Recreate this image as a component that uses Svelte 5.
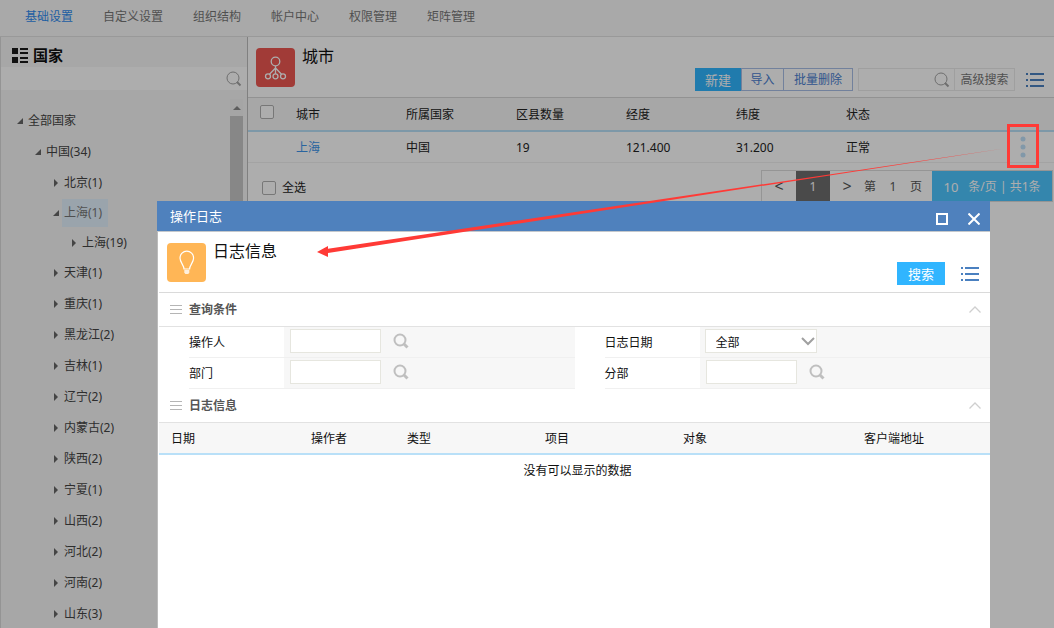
<script>
  const tabs = ["基础设置", "自定义设置", "组织结构", "帐户中心", "权限管理", "矩阵管理"];

  // Flattened country tree: depth drives the indent, open flips the triangle.
  const tree = [
    { name: "全部国家", depth: 0, open: true },
    { name: "中国(34)", depth: 1, open: true },
    { name: "北京(1)", depth: 2 },
    { name: "上海(1)", depth: 2, open: true },
    { name: "上海(19)", depth: 3 },
    { name: "天津(1)", depth: 2 },
    { name: "重庆(1)", depth: 2 },
    { name: "黑龙江(2)", depth: 2 },
    { name: "吉林(1)", depth: 2 },
    { name: "辽宁(2)", depth: 2 },
    { name: "内蒙古(2)", depth: 2 },
    { name: "陕西(2)", depth: 2 },
    { name: "宁夏(1)", depth: 2 },
    { name: "山西(2)", depth: 2 },
    { name: "河北(2)", depth: 2 },
    { name: "河南(2)", depth: 2 },
    { name: "山东(3)", depth: 2 },
  ];

  const cityCols = ["城市", "所属国家", "区县数量", "经度", "纬度", "状态"];
  const cities = [["上海", "中国", "19", "121.400", "31.200", "正常"]];

  const logCols = [
    { name: "日期", width: 140 },
    { name: "操作者", width: 96 },
    { name: "类型", width: 138 },
    { name: "项目", width: 138 },
    { name: "对象", width: 181 },
    { name: "客户端地址", width: 138 },
  ];

  let selected = $state("上海(1)");
</script>

{#snippet listIcon()}
  <svg class="list-icon" width="18" height="16" viewBox="0 0 18 16" aria-hidden="true">
    <path d="M0 2h2M4 2h14M0 8h2M4 8h14M0 14h2M4 14h14" stroke="currentColor" stroke-width="2" />
  </svg>
{/snippet}

{#snippet thinLens()}
  <svg width="16" height="16" viewBox="0 0 16 16" fill="none" stroke="#a3a3a3" aria-hidden="true">
    <circle cx="7" cy="7" r="6" />
    <path d="M11 11l3.5 3.5" stroke-width="2" />
  </svg>
{/snippet}

{#snippet boldLens()}
  <svg width="16" height="16" viewBox="0 0 16 16" fill="none" stroke="#bfbfbf" aria-hidden="true">
    <circle cx="7" cy="7" r="5.500" stroke-width="2" />
    <path d="M10.5 10.5l4 4" stroke-width="3" />
  </svg>
{/snippet}

{#snippet sectionHead(title)}
  <div class="section-head">
    <svg width="12" height="10" viewBox="0 0 12 10" aria-hidden="true">
      <path d="M0 .5h12M0 4.500h12M0 8.500h12" stroke="#b5b5b5" />
    </svg>
    <h3>{title}</h3>
    <button class="bare" aria-label="收起{title}">
      <svg width="12" height="8" viewBox="0 0 12 8" aria-hidden="true">
        <path d="M.5 6.5L6 1l5.500 5.500" fill="none" stroke="#cfcfcf" stroke-width="1.300" />
      </svg>
    </button>
  </div>
{/snippet}

{#snippet lookup(id)}
  <div class="field">
    <input {id} type="text" />
    <button class="bare" aria-label="选择">{@render boldLens()}</button>
  </div>
{/snippet}

<div class="page">
  <nav class="tabs">
    {#each tabs as tab, i}
      <a href="#tab{i}" class:active={i === 0}>{tab}</a>
    {/each}
  </nav>

  <div class="columns">
    <aside>
      <div class="side-head">
        <svg width="16" height="15" viewBox="0 0 16 15" aria-hidden="true">
          <path d="M0 0h6v6H0zM0 9h6v6H0zM8 0h8v2H8zM8 4h8v2H8zM8 9h8v2H8zM8 13h8v2H8z" fill="#1a1a1a" />
        </svg>
        <h2>国家</h2>
      </div>
      <div class="side-search">
        <input type="text" aria-label="搜索国家" />
        <button class="bare" aria-label="搜索">{@render thinLens()}</button>
      </div>
      <div class="side-body">
        <ul>
          {#each tree as node}
            <li style="padding-left: {node.depth * 18}px">
              <svg width="6" height="8" viewBox="0 0 6 8" aria-hidden="true">
                <path d={node.open ? "M6 1v6H0z" : "M1 0l4 4-4 4z"} fill="#666" />
              </svg>
              <button
                class="bare node"
                class:selected={node.name === selected}
                onclick={() => (selected = node.name)}>{node.name}</button
              >
            </li>
          {/each}
        </ul>
        <div class="scrollbar">
          <svg width="8" height="4" viewBox="0 0 8 4" aria-hidden="true">
            <path d="M0 4l4-4 4 4z" fill="#8a8a8a" />
          </svg>
          <div class="thumb"></div>
        </div>
      </div>
    </aside>

    <main>
      <header class="main-head">
        <svg class="badge red" width="39" height="39" viewBox="0 0 39 39" fill="none" stroke="#fff" aria-hidden="true">
          <circle cx="19.500" cy="13.500" r="4.300" stroke-width="1.300" />
          <path d="M19.500 18v8M19.500 20l-6 6.200M19.500 20l6 6.200" stroke-width="1.300" />
          <circle cx="12" cy="28.300" r="2.500" stroke-width="1.300" />
          <circle cx="19.500" cy="28.300" r="2.500" stroke-width="1.300" />
          <circle cx="27" cy="28.300" r="2.500" stroke-width="1.300" />
        </svg>
        <h1>城市</h1>
        <div class="toolbar">
          <div class="group">
            <button class="primary">新建</button>
            <button class="outline">导入</button>
            <button class="outline wide">批量删除</button>
          </div>
          <div class="search">
            <input type="text" aria-label="搜索城市" />
            <button class="bare" aria-label="搜索">{@render thinLens()}</button>
            <button class="advanced">高级搜索</button>
          </div>
          <button class="bare blue" aria-label="菜单">{@render listIcon()}</button>
        </div>
      </header>

      <table class="cities">
        <colgroup>
          <col class="c-check" />
          {#each cityCols as _}<col class="c-data" />{/each}
          <col />
        </colgroup>
        <thead>
          <tr>
            <th><input type="checkbox" aria-label="选择全部城市" /></th>
            {#each cityCols as col}<th>{col}</th>{/each}
            <th></th>
          </tr>
        </thead>
        <tbody>
          {#each cities as row}
            <tr>
              <td></td>
              {#each row as cell, i}
                <td>{#if i === 0}<a href="#city">{cell}</a>{:else}{cell}{/if}</td>
              {/each}
              <td class="more">
                <button class="bare" aria-label="更多">
                  <svg width="6" height="22" viewBox="0 0 6 22" fill="#bfe0fa" aria-hidden="true">
                    <circle cx="3" cy="3" r="2.500" />
                    <circle cx="3" cy="11" r="2.500" />
                    <circle cx="3" cy="19" r="2.500" />
                  </svg>
                </button>
              </td>
            </tr>
          {/each}
        </tbody>
      </table>

      <footer>
        <label><input type="checkbox" />全选</label>
        <div class="pager">
          <button class="bare step">&lt;</button>
          <button class="current">1</button>
          <button class="bare step">&gt;</button>
          <span>第</span>
          <span class="num">1</span>
          <span>页</span>
          <div class="size"><span class="count">10</span><span>条/页 | 共1条</span></div>
        </div>
      </footer>
    </main>
  </div>

  <div class="mask"></div>

  <div class="dialog" role="dialog" aria-labelledby="dialog-title">
    <div class="titlebar">
      <h2 id="dialog-title">操作日志</h2>
      <button class="bare" aria-label="最大化">
        <svg width="12" height="12" viewBox="0 0 12 12" aria-hidden="true">
          <path d="M1 1h10v10H1z" fill="none" stroke="#fff" stroke-width="2" />
        </svg>
      </button>
      <button class="bare" aria-label="关闭">
        <svg width="12" height="12" viewBox="0 0 12 12" aria-hidden="true">
          <path d="M.5.5l11 11M11.500.5l-11 11" stroke="#fff" stroke-width="2" />
        </svg>
      </button>
    </div>
    <div class="dialog-body">
      <header class="dialog-head">
        <svg class="badge orange" width="39" height="39" viewBox="0 0 39 39" fill="none" stroke="#fff" aria-hidden="true">
          <path d="M17 26c0-4-4-6.500-4-11a6.800 6.800 0 0 1 13.600 0c0 4.500-4 7-4 11z" stroke-width="1.200" />
          <path d="M17.300 27h5v2.500l-1 1.500h-3l-1-1.500z" fill="#fff" fill-opacity=".8" stroke="none" />
        </svg>
        <h2>日志信息</h2>
        <div class="dialog-tools">
          <button class="primary search-btn">搜索</button>
          <button class="bare blue" aria-label="菜单">{@render listIcon()}</button>
        </div>
      </header>

      {@render sectionHead("查询条件")}
      <form>
        <div class="form-row">
          <label for="operator">操作人</label>
          {@render lookup("operator")}
          <label for="log-date">日志日期</label>
          <div class="field">
            <div class="select">
              <select id="log-date"><option>全部</option></select>
              <svg width="14" height="9" viewBox="0 0 14 9" aria-hidden="true">
                <path d="M1 1l6 6 6-6" fill="none" stroke="#a0a0a0" stroke-width="2" />
              </svg>
            </div>
          </div>
        </div>
        <div class="form-row">
          <label for="department">部门</label>
          {@render lookup("department")}
          <label for="branch">分部</label>
          {@render lookup("branch")}
        </div>
      </form>

      {@render sectionHead("日志信息")}
      <table class="logs">
        <colgroup>
          {#each logCols as col}<col style="width: {col.width}px" />{/each}
        </colgroup>
        <thead>
          <tr>{#each logCols as col}<th>{col.name}</th>{/each}</tr>
        </thead>
        <tbody>
          <tr><td colspan={logCols.length}>没有可以显示的数据</td></tr>
        </tbody>
      </table>
    </div>
  </div>

  <!-- Callout: box round the row menu, arrow down to the dialog it opens -->
  <div class="callout-box"></div>
  <svg class="callout-arrow" viewBox="0 0 687 108" preserveAspectRatio="none" aria-hidden="true">
    <path d="M0 104L11 98V100.800L687 0.500L11 105V109z" fill="#ff3a36" />
  </svg>
</div>

<style>
  :global(body) {
    margin: 0;
    background: #fff;
  }
  .page {
    position: relative;
    height: 100vh;
    overflow: hidden;
    display: flex;
    flex-direction: column;
    font: 12px/20px "Noto Sans", "Noto Sans CJK SC", sans-serif;
    color: #222;
  }
  .page :global(*) {
    box-sizing: border-box;
  }
  h1,
  h2,
  h3,
  ul {
    margin: 0;
    padding: 0;
    font-weight: 400;
  }
  svg {
    display: block;
    flex: none;
  }
  button,
  input,
  select {
    font: inherit;
    color: inherit;
    margin: 0;
    padding: 0;
    border-radius: 0;
  }
  a {
    text-decoration: none;
  }
  .bare {
    border: 0;
    background: none;
  }
  .blue {
    color: #4a80c0;
  }
  .primary {
    border: 0;
    height: 23px;
    background: #30b5ff;
    color: #fff;
    font-size: 13px;
  }
  .badge {
    border-radius: 4px;
  }
  .red {
    background: #ed5752;
  }
  .orange {
    background: #ffb656;
  }
  input[type="checkbox"] {
    appearance: none;
    display: block;
    width: 14px;
    height: 14px;
    border: 1px solid #b0b0b0;
    border-radius: 2px;
    background: #fff;
  }

  .tabs {
    flex: none;
    height: 37px;
    padding: 7px 25px 0;
    display: flex;
    gap: 30px;
    background: #f9f9f9;
    border-bottom: 1px solid #e2e2e2;
  }
  .tabs a {
    color: #777;
  }
  .tabs a.active {
    color: #2f8cf0;
  }
  .columns {
    flex: 1;
    min-height: 0;
    display: flex;
  }

  aside {
    width: 248px;
    flex: none;
    display: flex;
    flex-direction: column;
    background: #f7f7f7;
    border-left: 1px solid #dadada;
    border-right: 1px solid #bdbdbd;
  }
  .side-head {
    height: 30px;
    padding: 6px 11px 0;
    display: flex;
    align-items: center;
    gap: 5px;
  }
  .side-head h2 {
    font-size: 15px;
    font-weight: 700;
    color: #111;
  }
  .side-search {
    height: 23px;
    padding-right: 5px;
    display: flex;
    align-items: center;
    background: #fff;
  }
  .side-search input {
    flex: 1;
    min-width: 0;
    border: 0;
    background: none;
  }
  .side-body {
    flex: 1;
    min-height: 0;
    display: flex;
    overflow: hidden;
  }
  .side-body ul {
    flex: 1;
    padding: 15px 0 0 16px;
    list-style: none;
  }
  .side-body li {
    height: 31px;
    display: flex;
    align-items: center;
    gap: 3px;
  }
  .side-body li:has(.selected) {
    height: 30px;
  }
  .side-body li:has(.selected) + li {
    height: 29px;
  }
  .node {
    height: 28px;
    padding: 0 6px 0 2px;
    color: #444;
  }
  .node.selected {
    background: #e3f2fe;
    color: #777;
  }
  .scrollbar {
    width: 13px;
    margin: 9px 4px 0 0;
    padding-top: 7px;
    display: flex;
    flex-direction: column;
    align-items: center;
    gap: 6px;
    background: #f4f4f4;
  }
  .thumb {
    width: 13px;
    height: 240px;
    background: #c8c8c8;
  }

  main {
    flex: 1;
    min-width: 0;
    background: #fff;
  }
  .main-head {
    height: 61px;
    padding: 11px 10px 0 8px;
    display: flex;
    align-items: flex-start;
    gap: 7px;
    border-bottom: 1px solid #d8d8d8;
  }
  h1,
  .dialog-head h2 {
    font-size: 16px;
    line-height: 16px;
    color: #111;
  }
  .toolbar {
    margin: 20px 0 0 auto;
    display: flex;
    align-items: center;
  }
  .group,
  .search {
    display: flex;
    height: 23px;
  }
  .group .primary {
    width: 46px;
  }
  .outline {
    width: 43px;
    padding-top: 1px;
    border: 1px solid #a8bfe6;
    background: none;
    color: #4a80d0;
  }
  .outline.wide {
    width: 69px;
    border-left: 0;
  }
  .search {
    width: 157px;
    margin: 0 11px 0 5px;
    align-items: center;
    border: 1px solid #eaeaea;
  }
  .search input {
    flex: 1;
    min-width: 0;
    border: 0;
    background: none;
  }
  .advanced {
    width: 60px;
    height: 21px;
    margin-left: 4px;
    border: 0;
    border-left: 1px solid #eaeaea;
    background: none;
    color: #777;
  }

  table {
    width: 100%;
    table-layout: fixed;
    border-collapse: separate;
    border-spacing: 0;
  }
  th,
  td {
    padding: 2px 0 0;
    text-align: left;
    font-weight: 400;
  }
  thead {
    background: #f7f7f7;
  }
  th {
    height: 34px;
    border-bottom: 2px solid #b9e0f8;
  }
  .c-check {
    width: 48px;
  }
  .c-data {
    width: 110px;
  }
  .cities td {
    height: 31px;
    border-bottom: 1px solid #f0f0f0;
  }
  .cities input {
    margin: 0 0 6px 12px;
  }
  .cities a {
    color: #3d94ea;
  }
  .cities .more {
    padding: 0;
  }
  .more button {
    display: block;
    margin: 0 28px 0 auto;
  }

  footer {
    padding: 7px 1px 0 14px;
    display: flex;
    justify-content: space-between;
    align-items: flex-start;
  }
  footer label {
    display: flex;
    align-items: center;
    gap: 6px;
    padding-top: 8px;
  }
  .pager {
    height: 32px;
    display: flex;
    align-items: center;
    border: 1px solid #dcdcdc;
    color: #555;
  }
  .pager span {
    padding-top: 2px;
  }
  .step {
    width: 34px;
    font-size: 16px;
  }
  .current {
    width: 34px;
    height: 30px;
    padding-top: 2px;
    border: 0;
    background: #6e6e6e;
    color: #fff;
  }
  .num {
    width: 34px;
    text-align: center;
  }
  .size {
    width: 120px;
    height: 30px;
    margin-left: 10px;
    display: flex;
    align-items: center;
    justify-content: center;
    gap: 10px;
    background: #4dc6ff;
    color: #fff;
  }
  .count {
    font-size: 13px;
  }

  .mask {
    position: absolute;
    inset: 0;
    background: rgba(0, 0, 0, 0.32);
  }

  .dialog {
    position: absolute;
    top: 201px;
    right: 64px;
    bottom: 0;
    left: 157px;
    display: flex;
    flex-direction: column;
    background: #fff;
    color: #111;
  }
  .titlebar {
    height: 30px;
    padding: 0 10px 0 13px;
    display: flex;
    align-items: center;
    gap: 20px;
    background: #4f81bd;
    color: #fff;
  }
  .titlebar h2 {
    flex: 1;
    font-size: 13px;
  }
  .titlebar button {
    padding-top: 6px;
  }
  .dialog-body {
    flex: 1;
    border-top: 1px solid #c4c8cc;
    border-left: 1px solid #bbb;
    padding-left: 1px;
  }
  .dialog-head {
    height: 61px;
    padding: 11px 11px 0 8px;
    display: flex;
    align-items: flex-start;
    gap: 7px;
    border-bottom: 1px solid #dadada;
  }
  .dialog-tools {
    margin: 19px 0 0 auto;
    display: flex;
    align-items: center;
    gap: 16px;
  }
  .search-btn {
    width: 48px;
  }
  .section-head {
    height: 34px;
    padding: 0 9px 0 11px;
    display: flex;
    align-items: center;
    gap: 7px;
    border-bottom: 1px solid #e2e2e2;
  }
  .section-head h3 {
    flex: 1;
    font-size: 12px;
    font-weight: 700;
    color: #555;
  }

  .form-row {
    height: 31px;
    display: grid;
    grid-template-columns: 125px 1fr 125px 1fr;
  }
  .form-row label {
    margin-left: 30px;
    padding-top: 6px;
    border-bottom: 1px solid #f0f0f0;
  }
  .field {
    padding: 0 5px 2px;
    display: flex;
    align-items: center;
    gap: 12px;
    background: #f7f7f7;
    border-bottom: 1px solid #f0f0f0;
  }
  .field input {
    width: 91px;
    height: 24px;
    margin-left: 1px;
    border: 1px solid #e6e6df;
    background: #fff;
  }
  .select {
    width: 112px;
    height: 24px;
    padding-right: 1px;
    display: flex;
    align-items: center;
    border: 1px solid #e6e6df;
    background: #fff;
  }
  .select select {
    flex: 1;
    appearance: none;
    padding: 4px 0 0 10px;
    border: 0;
    background: none;
  }

  .logs th {
    height: 32px;
    padding-left: 12px;
  }
  .logs td {
    height: 32px;
    padding: 0 0 0 6px;
    text-align: center;
  }

  .callout-box {
    position: absolute;
    top: 124px;
    right: 15px;
    width: 32px;
    height: 44px;
    border: 3px solid #ff3a36;
  }
  .callout-arrow {
    position: absolute;
    top: 148px;
    left: 317px;
    width: calc(100% - 367px);
    height: 108px;
    overflow: visible;
  }
</style>
